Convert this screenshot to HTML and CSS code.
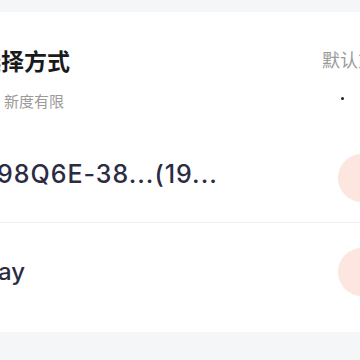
FILE: index.html
```html
<!DOCTYPE html>
<html lang="zh">
<head>
<meta charset="utf-8">
<link rel="stylesheet" href="styles.css">
</head>
<body>
<div class="page">
  <div class="card">
    <div class="header">
      <div class="head-left">
        <div class="title">选择方式</div>
        <div class="subtitle">新度有限</div>
      </div>
      <div class="head-right">
        <div class="default">默认方式</div>
        <div class="dot"></div>
      </div>
    </div>
    <div class="row row-first">
      <div class="row-text row-text-first">98Q6E-38...(19...</div>
      <div class="radio"></div>
    </div>
    <div class="row row-second">
      <div class="row-text row-text-second">ay</div>
      <div class="radio"></div>
    </div>
  </div>
</div>
</body>
</html>
```
FILE: styles.css
```css
html, body {
  margin: 0;
  padding: 0;
  background: #f5f6f8;
  overflow: hidden;
  width: 360px;
  height: 360px;
}
.page {
  padding-top: 12px;
}
.card {
  background: #ffffff;
  height: 320px;
  overflow: hidden;
  font-family: "Liberation Sans", "Noto Sans CJK SC", sans-serif;
}
.header {
  display: flex;
  padding-top: 33px;
  height: 88px;
}
.head-left {
  flex: 1;
}
.title {
  font-family: "Noto Sans CJK SC", sans-serif;
  font-size: 23px;
  font-weight: 700;
  line-height: 30px;
  color: #1a1a1a;
  margin-left: -22px;
  white-space: nowrap;
}
.subtitle {
  font-family: "Noto Sans CJK SC", sans-serif;
  font-size: 15px;
  line-height: 20px;
  color: #9a9a9a;
  margin-top: 16px;
  margin-left: 4px;
  white-space: nowrap;
}
.head-right {
  width: 38px;
  white-space: nowrap;
  display: flex;
  flex-direction: column;
}
.default {
  font-family: "Noto Sans CJK SC", sans-serif;
  font-size: 18px;
  line-height: 28px;
  color: #9b9b9b;
}
.dot {
  width: 3px;
  height: 3px;
  border-radius: 50%;
  background: #222;
  margin-top: 24px;
  margin-left: 19px;
}
.row {
  display: flex;
  align-items: center;
  justify-content: space-between;
}
.row-first {
  height: 89px;
  border-bottom: 1px solid #f1f1f3;
}
.row-second {
  height: 97px;
}
.row-text {
  font-family: Inter, "Liberation Sans", sans-serif;
  font-size: 24px;
  font-weight: 500;
  line-height: 34px;
  color: #2b2c44;
  white-space: nowrap;
}
.row-text-first {
  font-size: 25px;
  letter-spacing: 1px;
  margin-left: -3px;
  margin-bottom: 8px;
}
.row-text-second {
  margin-left: -2px;
}
.radio {
  width: 48px;
  height: 48px;
  border-radius: 50%;
  background: #fce6df;
  margin-right: -26px;
  flex-shrink: 0;
}
```
